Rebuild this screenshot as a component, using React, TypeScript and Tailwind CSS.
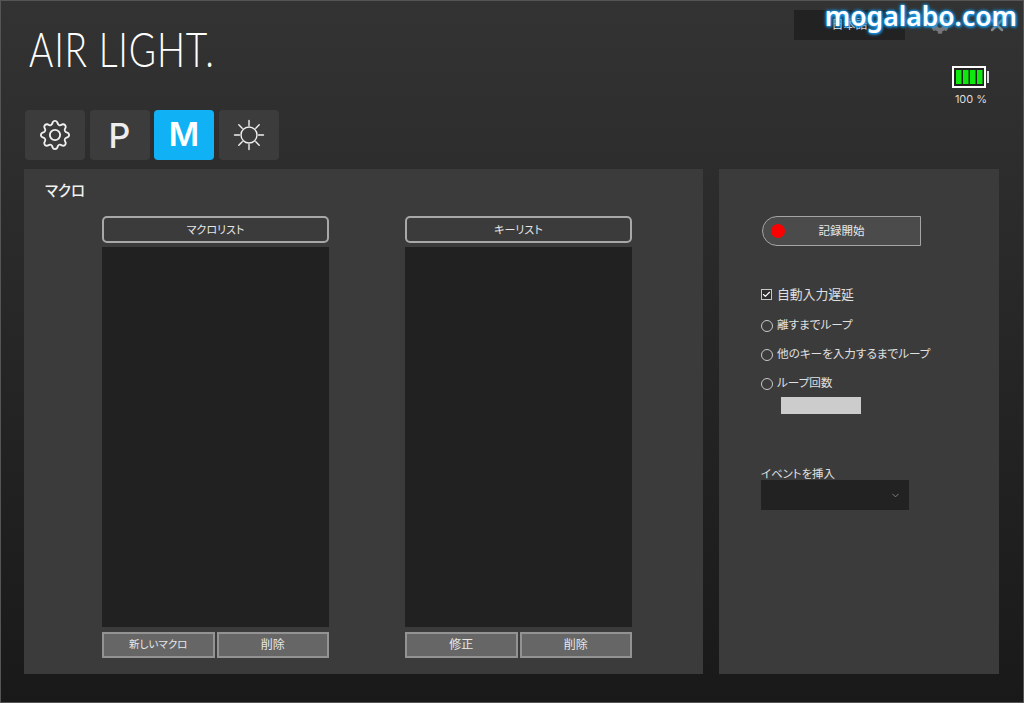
import { X, ChevronDown, Check } from "lucide-react";
import { BsGear } from "react-icons/bs";
import { FaCog } from "react-icons/fa";

const jp = "font-['Inter','Noto_Sans_CJK_JP',sans-serif] [font-feature-settings:'palt']";

function Tab({ active, children }: { active?: boolean; children: React.ReactNode }) {
  return (
    <div
      className={
        "w-[60px] h-[50px] rounded flex items-center justify-center " +
        (active ? "bg-[#10b2f5]" : "bg-[#3c3c3c]")
      }
    >
      {children}
    </div>
  );
}

function SunIcon() {
  return (
    <svg width="32" height="32" viewBox="0 0 32 32" fill="none" stroke="#f0f0f0" strokeWidth="1.4" strokeLinecap="round">
      <circle cx="16" cy="16" r="8" />
      <path d="M16 1.5v5M16 25.5v5M1.5 16h5M25.5 16h5M5.8 5.8l3.4 3.4M22.8 22.8l3.4 3.4M5.8 26.2l3.4-3.4M22.8 9.2l3.4-3.4" />
    </svg>
  );
}

function SmallButton({ label, size }: { label: string; size: string }) {
  return (
    <button className={"flex-1 h-[26px] border-2 border-[#939393] bg-[#666666] text-[#e8e8e8] " + size}>
      {label}
    </button>
  );
}

function ListColumn({ title, buttons }: { title: string; buttons: { label: string; size: string }[] }) {
  return (
    <div className="w-[227px] flex flex-col">
      <div className="h-[27px] pt-[1px] rounded-[5px] border-2 border-[#a8a8a8] flex items-center justify-center text-[11px] text-[#e8e8e8]">
        {title}
      </div>
      <div className="mt-[4px] h-[380px] bg-[#212121]" />
      <div className="mt-[5px] flex gap-[2px]">
        {buttons.map((b) => (
          <SmallButton key={b.label} label={b.label} size={b.size} />
        ))}
      </div>
    </div>
  );
}

function Radio({ label }: { label: string }) {
  return (
    <div className="flex items-center h-[17px] gap-[4px] text-[11.6px] text-[#e0e0e0]">
      <span className="w-[12px] h-[12px] rounded-full border-[1.5px] border-[#c8c8c8]" />
      {label}
    </div>
  );
}

function Battery() {
  return (
    <svg width="38" height="23" viewBox="0 0 38 23">
      <rect x="1" y="1" width="32" height="20" fill="#222" stroke="#fff" strokeWidth="2" />
      <rect x="4" y="4" width="5.5" height="14" fill="#0ee80e" />
      <rect x="11" y="4" width="5.5" height="14" fill="#0ee80e" />
      <rect x="18" y="4" width="5.5" height="14" fill="#0ee80e" />
      <rect x="25" y="4" width="5.5" height="14" fill="#0ee80e" />
      <rect x="35" y="5" width="2" height="12" fill="#ddd" />
    </svg>
  );
}

export default function App() {
  return (
    <div
      className={`relative w-[1024px] h-[703px] overflow-hidden bg-gradient-to-b from-[#333333] to-[#191919] border border-[#555] ${jp}`}
    >
      <div className="absolute top-0 right-[6px] text-[26.5px] leading-[31px] font-semibold font-['Noto_Sans',sans-serif] text-white [text-shadow:0_0_4px_#1a9cf0,0_0_3px_#1a9cf0,0_0_2px_#1a9cf0,1px_1px_3px_#1a9cf0]">
        mogalabo.com
      </div>

      <header className="h-[109px] flex justify-between pl-[28px]">
        <div className="mt-[20px] origin-left scale-x-[0.79] text-[47px] leading-[56px] font-light tracking-[1px] text-white font-['Lato',sans-serif]">
          AIR LIGHT.
        </div>
        <div className="flex flex-col items-end pr-[16px]">
          <div className="flex items-center mt-[9px]">
            <div className="w-[111px] h-[30px] bg-[#222] flex items-center justify-center text-[12px] text-[#ddd]">
              日本語
            </div>
            <FaCog className="ml-[26px] text-[#777]" size={18} />
            <X className="ml-[38px] text-[#888]" size={20} strokeWidth={3} />
          </div>
          <div className="mt-[26px] mr-[17px] flex flex-col items-center">
            <Battery />
            <div className="mt-[2px] text-[11px] text-[#ddd]">100 %</div>
          </div>
        </div>
      </header>

      <nav className="flex gap-[4.5px] pl-[24px]">
        <Tab>
          <BsGear size={30} className="text-[#f0f0f0]" />
        </Tab>
        <Tab>
          <span className="text-[34px] font-medium text-[#eee] font-['Inter',sans-serif]">P</span>
        </Tab>
        <Tab active>
          <span className="text-[33px] font-semibold text-white font-['Inter',sans-serif]">M</span>
        </Tab>
        <Tab>
          <SunIcon />
        </Tab>
      </nav>

      <main className="mt-[9px] flex gap-[16px] pl-[23px]">
        <section className="relative w-[679px] h-[505px] bg-[#3b3b3b]">
          <h2 className="pl-[21px] pt-[11px] h-[47px] text-[14.5px] font-medium text-[#f0f0f0]">マクロ</h2>
          <div className="flex gap-[76px] pl-[78px]">
            <ListColumn
              title="マクロリスト"
              buttons={[
                { label: "新しいマクロ", size: "text-[10.5px]" },
                { label: "削除", size: "text-[12px]" },
              ]}
            />
            <ListColumn
              title="キーリスト"
              buttons={[
                { label: "修正", size: "text-[12px]" },
                { label: "削除", size: "text-[12px]" },
              ]}
            />
          </div>
        </section>

        <aside className="w-[280px] h-[505px] bg-[#3b3b3b] pl-[43px] pt-[47px]">
          <button className="relative w-[159px] h-[30px] rounded-l-full border border-[#a5a5a5] bg-[#4b4b4b] flex items-center justify-center pt-[2px] text-[11.5px] text-[#e8e8e8]">
            <span className="absolute left-[8px] top-[7px] w-[14px] h-[14px] rounded-full bg-[#fb0000]" />
            記録開始
          </button>

          <div className="-ml-[1px] mt-[40px] flex items-center h-[17px] gap-[5px] text-[12.8px] text-[#e0e0e0]">
            <span className="w-[11px] h-[11px] border border-[#c8c8c8] bg-[#2e2e2e] flex items-center justify-center">
              <Check size={9} strokeWidth={3} className="text-white" />
            </span>
            自動入力遅延
          </div>
          <div className="-ml-[1px] mt-[14px] flex flex-col gap-[12px]">
            <Radio label="離すまでループ" />
            <Radio label="他のキーを入力するまでループ" />
            <Radio label="ループ回数" />
          </div>
          <div className="mt-[5px] ml-[19px] w-[80px] h-[17px] bg-[#cccccc]" />

          <div className="-ml-[1px] mt-[53px] h-[13px] text-[11.4px] leading-[15px] text-[#e0e0e0]">イベントを挿入</div>
          <div className="-ml-[1px] w-[148px] h-[30px] bg-[#222] flex items-center justify-end pr-[8px]">
            <ChevronDown size={11} strokeWidth={2} className="text-[#888]" />
          </div>
        </aside>
      </main>
    </div>
  );
}
